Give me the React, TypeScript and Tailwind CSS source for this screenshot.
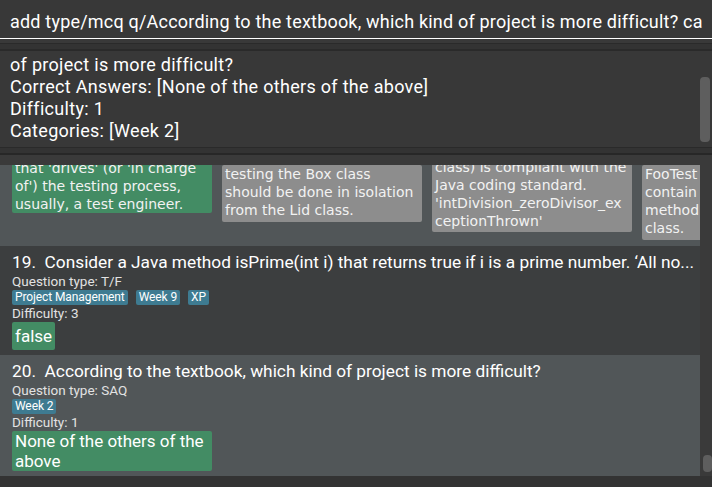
import React from "react";

const sans = "font-['Roboto','Liberation_Sans',sans-serif]";
const cardFont = "font-['DejaVu_Sans','Liberation_Sans',sans-serif]";

const Tag = ({ label }: { label: string }) => (
  <span className="bg-[#3e7b91] text-white text-[12px] leading-[15px] px-[3px] rounded-[2px] tracking-[-0.1px]">
    {label}
  </span>
);

const ChoiceCard = ({
  lines,
  color,
  offset,
  bottom,
}: {
  lines: string[];
  color: string;
  offset: string;
  bottom: string;
}) => (
  <div className={`w-[200px] shrink-0 rounded-[2px] px-[3px] ${color} ${offset} ${bottom}`}>
    {lines.map((l) => (
      <div key={l} className="whitespace-nowrap leading-[18px]">
        {l}
      </div>
    ))}
  </div>
);

const QuestionCell = ({
  index,
  title,
  type,
  tags,
  difficulty,
  answer,
  bg,
  box,
}: {
  index: number;
  title: string;
  type: string;
  tags: string[];
  difficulty: number;
  answer: string[];
  bg: string;
  box: string;
}) => (
  <div className={`${bg} pl-[12px] pt-[5px] pb-[5px]`}>
    <div className="text-white text-[17.3px] leading-[22px] whitespace-nowrap">
      {index}.&nbsp;&nbsp;{title}
    </div>
    <div className="text-[#e2e2e2] text-[13.5px] leading-[16px]">Question type: {type}</div>
    <div className="flex gap-[8px] mt-[1px]">
      {tags.map((t) => (
        <Tag key={t} label={t} />
      ))}
    </div>
    <div className="text-[#e2e2e2] text-[13.5px] leading-[16px]">Difficulty: {difficulty}</div>
    <div className={`mt-[1px] bg-[#438c64] rounded-[2px] px-[3px] text-white text-[17px] leading-[20px] ${box}`}>
      {answer.map((a) => (
        <div key={a}>{a}</div>
      ))}
    </div>
  </div>
);

export default function App() {
  return (
    <div className={`w-[712px] h-[487px] bg-[#333333] flex flex-col overflow-hidden ${sans}`}>
      {/* command box */}
      <div className="h-[39px] shrink-0 bg-[#383838] border-b border-white px-[10px] pt-[4px] flex items-center">
        <span className="text-white text-[18px] whitespace-nowrap tracking-[0.2px]">
          add type/mcq q/According to the textbook, which kind of project is more difficult? ca
        </span>
      </div>
      <div className="h-[4px] shrink-0 bg-[#393939]" />
      <div className="h-[1px] shrink-0 bg-[#2a2a2a]" />
      <div className="h-[5px] shrink-0 bg-[#333333]" />
      <div className="h-[2px] shrink-0 bg-[#2a2a2a]" />

      {/* result display */}
      <div className="h-[96px] shrink-0 bg-[#383838] relative pl-[10px] pt-[3px]">
        <div className="text-white text-[18px] leading-[22px] tracking-[0.3px]">
          <div>of project is more difficult?</div>
          <div>Correct Answers: [None of the others of the above]</div>
          <div>Difficulty: 1</div>
          <div>Categories: [Week 2]</div>
        </div>
        <div className="absolute right-[2px] top-[26px] w-[10px] h-[65px] rounded-[4px] bg-[#5e5e5e]" />
      </div>
      <div className="h-[1px] shrink-0 bg-[#2a2a2a]" />
      <div className="h-[5px] shrink-0 bg-[#333333]" />
      <div className="h-[2px] shrink-0 bg-[#272727]" />
      <div className="h-[10px] shrink-0 bg-[#3a3a3a]" />

      {/* question list */}
      <div className="flex-1 flex min-h-0">
        <div className="flex-1 flex flex-col overflow-hidden">
          <div className={`bg-[#515658] h-[81px] shrink-0 flex gap-[10px] pl-[12px] items-start overflow-hidden text-[14px] text-[#f2f2f2] ${cardFont}`}>
            <ChoiceCard
              color="bg-[#438c64]"
              offset="-mt-[6px]"
              bottom="pb-0"
              lines={["that 'drives' (or 'in charge", "of') the testing process,", "usually, a test engineer."]}
            />
            <ChoiceCard
              color="bg-[#8d8d8d]"
              offset="mt-0"
              bottom="pb-[3px]"
              lines={["testing the Box class", "should be done in isolation", "from the Lid class."]}
            />
            <ChoiceCard
              color="bg-[#8d8d8d]"
              offset="-mt-[7px]"
              bottom="pb-[2px]"
              lines={["class) is compliant with the", "Java coding standard.", "'intDivision_zeroDivisor_ex", "ceptionThrown'"]}
            />
            <ChoiceCard
              color="bg-[#8d8d8d]"
              offset="mt-0"
              bottom="pb-[3px]"
              lines={["FooTest", "contain", "method", "class."]}
            />
          </div>
          <QuestionCell
            index={19}
            bg="bg-[#3c3e3f]"
            box="w-fit py-[4px]"
            title="Consider a Java method isPrime(int i) that returns true if i is a prime number. ‘All no..."
            type="T/F"
            tags={["Project Management", "Week 9", "XP"]}
            difficulty={3}
            answer={["false"]}
          />
          <QuestionCell
            index={20}
            bg="bg-[#515658]"
            box="w-[200px] py-0"
            title="According to the textbook, which kind of project is more difficult?"
            type="SAQ"
            tags={["Week 2"]}
            difficulty={1}
            answer={["None of the others of the", "above"]}
          />
        </div>
        <div className="w-[12px] shrink-0 bg-[#3a3a3a] relative">
          <div className="absolute left-[3px] right-0 bottom-[4px] h-[17px] rounded-[4px] bg-[#5e5e5e]" />
        </div>
      </div>
      <div className="h-[11px] shrink-0 bg-[#333333]" />
    </div>
  );
}
